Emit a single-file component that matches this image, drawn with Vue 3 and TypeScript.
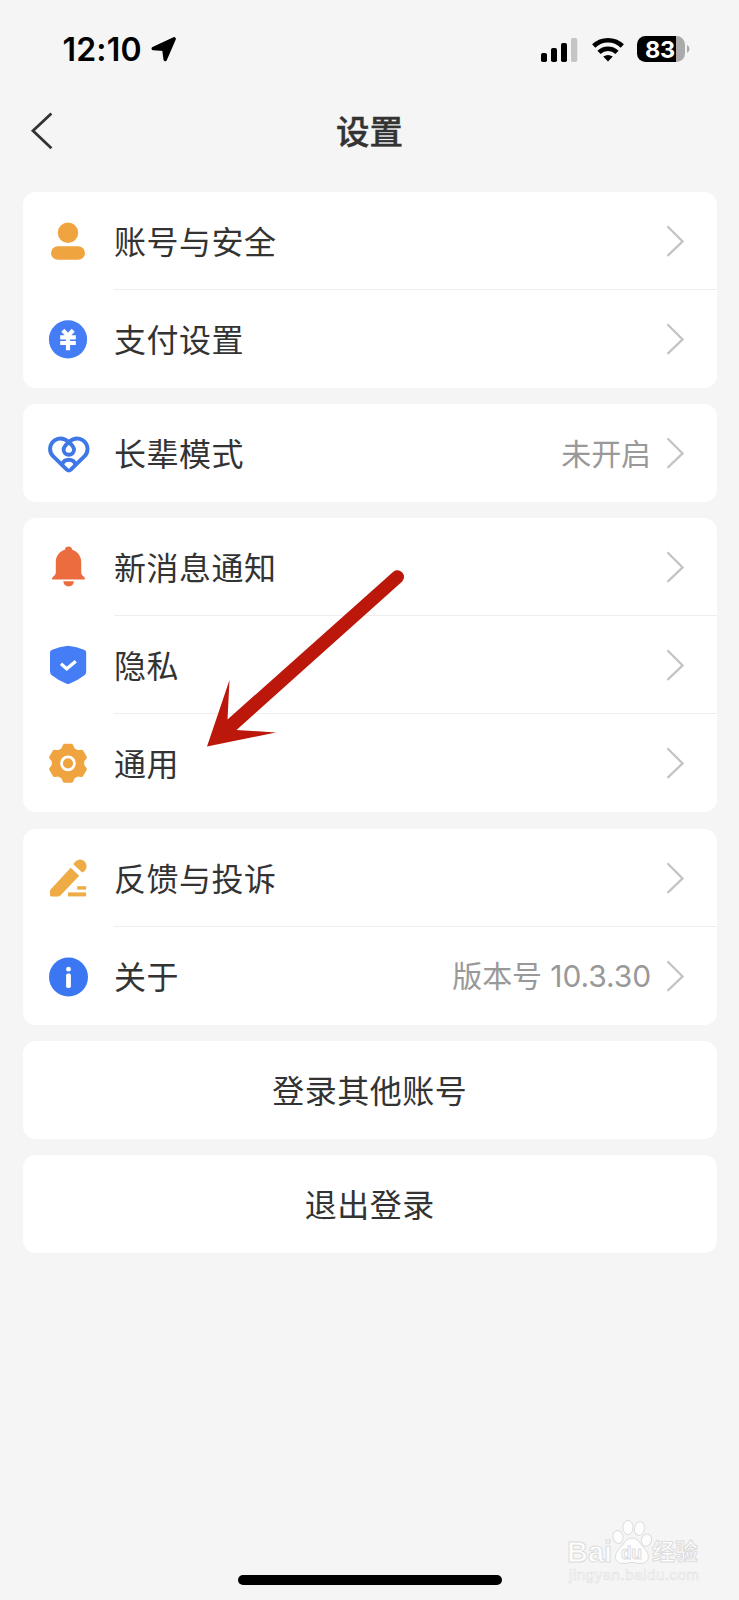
<script setup lang="ts">
type IconName = 'user' | 'yen' | 'heart' | 'bell' | 'shield' | 'gear' | 'pencil' | 'info'

interface Row {
  icon: IconName
  label: string
  value?: string
}

const groups: Row[][] = [
  [
    { icon: 'user', label: '账号与安全' },
    { icon: 'yen', label: '支付设置' },
  ],
  [{ icon: 'heart', label: '长辈模式', value: '未开启' }],
  [
    { icon: 'bell', label: '新消息通知' },
    { icon: 'shield', label: '隐私' },
    { icon: 'gear', label: '通用' },
  ],
  [
    { icon: 'pencil', label: '反馈与投诉' },
    { icon: 'info', label: '关于', value: '版本号 10.3.30' },
  ],
]

const actions: string[] = ['登录其他账号', '退出登录']

// Six-toothed gear outline: each tooth has two base points and two tip points.
function gearPoints(cx: number, cy: number): string {
  const points: string[] = []
  for (let tooth = 0; tooth < 6; tooth++) {
    const mid = tooth * 60 - 90
    const corners: [number, number][] = [
      [-21, 14.6],
      [-11, 18],
      [11, 18],
      [21, 14.6],
    ]
    for (const [offset, radius] of corners) {
      const angle = ((mid + offset) * Math.PI) / 180
      points.push(`${(cx + radius * Math.cos(angle)).toFixed(2)},${(cy + radius * Math.sin(angle)).toFixed(2)}`)
    }
  }
  return points.join(' ')
}

const gear = gearPoints(22, 22.3)
</script>

<template>
  <div class="screen">
    <header class="status">
      <span class="time">12:10</span>
      <svg class="locate" width="27" height="26" viewBox="0 0 27 26">
        <path d="M24.2 2.8 L3.2 12.6 L13.8 13.3 L15.2 23.6 Z" fill="#000" stroke="#000" stroke-width="3.4" stroke-linejoin="round" />
      </svg>
      <svg class="signal" width="37" height="25" viewBox="0 0 37 25">
        <rect x="0" y="16" width="6" height="9" rx="1.8" />
        <rect x="10" y="11" width="6" height="14" rx="1.8" />
        <rect x="20" y="6" width="6" height="19" rx="1.8" />
        <rect x="30" y="1" width="6.3" height="24" rx="1.8" fill="#c5c5c5" />
      </svg>
      <svg class="wifi" width="32" height="25" viewBox="0 0 32 25">
        <g fill="none" stroke="#000" stroke-width="4.6">
          <path d="M1.7 9 A20.5 20.5 0 0 1 30.3 9" />
          <path d="M7 15.4 A12.8 12.8 0 0 1 25 15.4" />
        </g>
        <path d="M11.2 19.6 Q16 16.2 20.8 19.6 L16 24.6 Z" />
      </svg>
      <div class="battery">
        <div class="cell"><span>83</span></div>
        <svg width="3" height="8" viewBox="0 0 3 8"><path d="M0 0 Q2.5 1.2 2.5 4 T0 8 Z" fill="#aaa" /></svg>
      </div>
    </header>

    <nav class="nav">
      <svg class="back" width="24" height="38" viewBox="0 0 24 38">
        <path d="M21.4 1.6 L3 18.8 L21.4 36.2" fill="none" stroke="#333" stroke-width="2.8" />
      </svg>
      <h1>设置</h1>
    </nav>

    <main class="list">
      <section v-for="(group, g) in groups" :key="g" class="card">
        <div v-for="row in group" :key="row.label" class="row">
          <svg class="icon" width="44" height="44" viewBox="0 0 44 44">
            <g v-if="row.icon === 'user'" fill="#f0a43f">
              <circle cx="22" cy="13.7" r="10.2" />
              <rect x="5" y="27.2" width="34" height="13.6" rx="6.8" />
            </g>
            <g v-else-if="row.icon === 'yen'">
              <circle cx="22" cy="22.4" r="19.1" fill="#447df5" />
              <path d="M16.8 13.2 L22 18.6 L27.2 13.2 M14.2 20.4 H29.8 M14.2 26 H29.8 M22 18 V33.200" fill="none" stroke="#fff" stroke-width="4.2" />
            </g>
            <g v-else-if="row.icon === 'heart'" fill="none" stroke="#3f78e6" stroke-width="3.9" stroke-linejoin="round">
              <path d="M22.8 11 C18.6 14.8 17.6 16.6 17.6 18.6 A5.2 5.2 0 0 0 28 18.6 C28 16.6 27 14.8 22.8 11 C18.6 7.4 13.4 6.4 9 9.2 C3.4 12.8 2.4 20.2 7 25.2 L20.8 38.6 Q22.8 40.4 24.8 38.6 L38.6 25.2 C43.2 20.2 42.2 12.8 36.6 9.2 C32.2 6.4 27 7.4 22.8 11 Z" />
              <path d="M16 33.6 Q17.6 28.8 22.8 28.8 T29.6 33.6" />
            </g>
            <g v-else-if="row.icon === 'bell'" fill="#eb6d3f">
              <path d="M22.5 1.6 C24.6 1.6 25.8 2.8 26.2 4.8 C31.6 6.4 35.2 11 35.2 17 V28 Q35.4 30.4 38.4 32.2 Q39.8 34.6 37.6 34.6 H7.4 Q5.2 34.6 6.6 32.2 Q9.6 30.4 9.8 28 V17 C9.8 11 13.4 6.4 18.8 4.8 C19.2 2.8 20.4 1.6 22.5 1.6 Z" />
              <path d="M17.2 36.2 H28 Q27 41.4 22.6 41.4 T17.2 36.2 Z" />
            </g>
            <g v-else-if="row.icon === 'shield'">
              <path d="M22 2.8 Q31 4 38 6.8 Q40.2 7.6 40.2 9.600 V28.6 Q40.2 30.8 38.4 32.2 Q31 37.8 23.4 40.8 Q22 41.4 20.6 40.8 Q13 37.8 5.8 32.2 Q4 30.8 4 28.6 V9.6 Q4 7.6 6.2 6.8 Q13 4 22 2.8 Z" fill="#447df5" />
              <path d="M15 20.8 L20.7 25.8 L29.8 18.200" fill="none" stroke="#fff" stroke-width="3.2" />
            </g>
            <g v-else-if="row.icon === 'gear'">
              <polygon :points="gear" fill="#f0a43f" stroke="#f0a43f" stroke-width="3.6" stroke-linejoin="round" />
              <circle cx="22" cy="22.3" r="6.5" fill="none" stroke="#fff" stroke-width="2.8" />
            </g>
            <g v-else-if="row.icon === 'pencil'" fill="#efab45">
              <path d="M4 35 Q4 34 4.8 33.2 L24.7 11.8 L33.2 19.8 L14.4 39.6 Q13.6 40.4 12.6 40.4 H5.4 Q4 40.4 4 39 Z" />
              <path d="M27.5 8.6 A6.600 6.600 0 1 1 36.2 16.4 Z" />
              <rect x="31.2" y="30.2" width="8.9" height="3.4" />
              <rect x="22" y="36.4" width="18.1" height="4" />
            </g>
            <g v-else>
              <circle cx="22.5" cy="23" r="19.5" fill="#3b77f2" />
              <circle cx="22.5" cy="15.2" r="2.4" fill="#fff" />
              <rect x="20.1" y="19.6" width="4.8" height="14.4" rx="1.8" fill="#fff" />
            </g>
          </svg>
          <div class="body">
            <span class="label">{{ row.label }}</span>
            <span v-if="row.value" class="value">{{ row.value }}</span>
            <svg class="chevron" width="18" height="32" viewBox="0 0 18 32">
              <path d="M0.4 1.400 L15.6 16.4 L0.4 31" fill="none" stroke="#c4c4c4" stroke-width="2.3" />
            </svg>
          </div>
        </div>
      </section>
      <button v-for="action in actions" :key="action" class="card action">{{ action }}</button>
    </main>

    <div class="home"></div>

    <svg class="pointer" width="204" height="182" viewBox="0 0 204 182">
      <path d="M5 178.5 L27.5 112 L25.5 151.5 L191.3 3.7 A6.6 6.6 0 0 1 200.2 13.4 L34.5 162 L74 164.5 Z" fill="#bb170b" />
    </svg>

    <svg class="mark" width="140" height="70" viewBox="0 0 140 70">
      <g fill="#fdfdfd" stroke="#dcdcdc" stroke-width="1">
        <text x="0" y="45.500" class="mark-latin" textLength="45" lengthAdjust="spacingAndGlyphs">Bai</text>
        <ellipse cx="51" cy="21" rx="5" ry="6.5" transform="rotate(-14 51 21)" />
        <ellipse cx="61" cy="11.5" rx="5" ry="7.2" />
        <ellipse cx="72.5" cy="12.5" rx="5" ry="7" transform="rotate(10 72.5 12.5)" />
        <ellipse cx="79.5" cy="24" rx="5" ry="6.2" transform="rotate(20 79.5 24)" />
        <path d="M65 22 C71 22 73 28 77 32 C83 37 83.5 47 74 47.5 C70 47.7 69 46.5 65 46.5 C61 46.5 60 47.7 56 47.5 C46 47 47 37 53 32 C57 28 59 22 65 22 Z" />
        <text x="54" y="42.5" class="mark-du" textLength="21" lengthAdjust="spacingAndGlyphs">du</text>
        <text x="85" y="43.500" class="mark-han" textLength="46">经验</text>
      </g>
      <text x="2" y="63.500" class="mark-url" textLength="130">jingyan.baidu.com</text>
    </svg>
  </div>
</template>

<style>
html,
body {
  margin: 0;
  background: #f5f5f5;
}
</style>

<style scoped>
.screen {
  position: relative;
  box-sizing: border-box;
  width: 739px;
  height: 1600px;
  display: flex;
  flex-direction: column;
  overflow: hidden;
  background: #f5f5f5;
  color: #333;
  font-family: 'Liberation Sans', 'Noto Sans CJK SC', sans-serif;
}
.status {
  display: flex;
  align-items: center;
  height: 98px;
  padding: 0 49px 0 62.5px;
  box-sizing: border-box;
  color: #000;
}
.time {
  width: 87px;
  padding-top: 2px;
  font: 600 32px/32px Inter, sans-serif;
  letter-spacing: 0.2px;
  white-space: nowrap;
}
.signal {
  margin-left: auto;
}
.wifi {
  margin: 0 13px 0 14px;
}
.battery {
  display: flex;
  align-items: center;
  gap: 2px;
}
.cell {
  box-sizing: border-box;
  width: 48px;
  height: 26px;
  padding-left: 8px;
  border-radius: 8.5px;
  background: linear-gradient(to right, #000 39.5px, #aaa 39.5px);
  color: #fff;
  font: 700 23.5px/27px Inter, sans-serif;
  letter-spacing: -0.2px;
}
.nav {
  display: grid;
  grid-template-columns: 60px 1fr 60px;
  align-items: center;
  height: 66px;
}
.back {
  margin-left: 30px;
}
h1 {
  margin: 0 0 3px;
  text-align: center;
  font-family: 'Noto Sans CJK SC', sans-serif;
  font-size: 33.5px;
  line-height: 40px;
  font-weight: 500;
  -webkit-text-stroke: 0.4px #333;
}
.list {
  display: flex;
  flex-direction: column;
  gap: 16.2px;
  margin: 28px 22.5px 0 23px;
}
.card {
  border-radius: 13px;
  background: #fff;
}
.row {
  display: flex;
  align-items: center;
  height: 98px;
  padding-left: 23px;
}
.icon {
  flex: none;
  margin-right: 24px;
}
.body {
  box-sizing: border-box;
  flex: 1;
  display: flex;
  align-items: center;
  height: 98px;
  padding-right: 32px;
}
.row:not(:last-child) .body {
  border-bottom: 1px solid #eee;
  padding-top: 1px;
}
.label,
.action {
  font-family: 'Noto Sans CJK SC', sans-serif;
  font-size: 32px;
  letter-spacing: 0.5px;
  line-height: 40px;
  color: #333;
}
.label {
  padding-bottom: 2px;
}
.value {
  margin-left: auto;
  padding-top: 1px;
  font-family: Inter, 'Noto Sans CJK SC', sans-serif;
  font-size: 30px;
  line-height: 40px;
  letter-spacing: -0.1px;
  color: #999;
}
.chevron {
  flex: none;
  margin-left: auto;
}
.value + .chevron {
  margin-left: 15.5px;
}
.action {
  height: 98px;
  padding: 0 0 2px;
  border: 0;
}
.home {
  width: 264px;
  height: 10px;
  margin: auto auto 15px;
  border-radius: 5px;
  background: #000;
}
.pointer {
  position: absolute;
  left: 202px;
  top: 568px;
}
.mark {
  position: absolute;
  left: 567px;
  top: 1516px;
}
.mark-latin {
  font: 700 29px 'Liberation Sans', sans-serif;
}
.mark-du {
  font: 700 19px 'Liberation Sans', sans-serif;
}
.mark-han {
  font: 700 23px 'Noto Sans CJK SC', sans-serif;
}
.mark-url {
  font: 400 15px 'Liberation Sans', sans-serif;
  fill: #fcfcfc;
  stroke: #e2e2e2;
  stroke-width: 0.6;
}
</style>
